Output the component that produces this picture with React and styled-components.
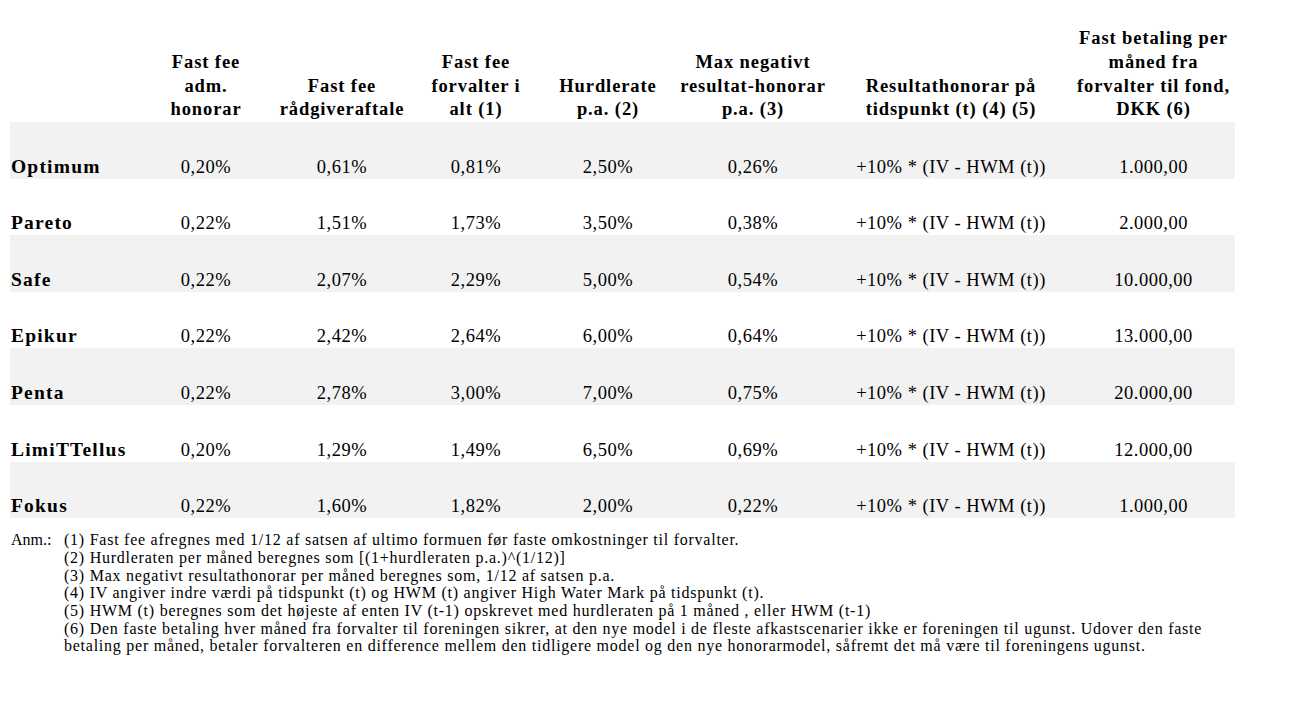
import React from 'react';
import styled, { createGlobalStyle } from 'styled-components';

const GlobalStyle = createGlobalStyle`
    html, body {
        margin: 0;
        padding: 0;
        background: #fff;
    }
    body {
        font-family: "Liberation Serif", "Times New Roman", serif;
        color: #000;
    }
`;

const Page = styled.div`
    width: 1291px;
    height: 705px;
    padding: 27px 0 0 10px;
    box-sizing: border-box;
`;

const FeeTable = styled.table`
    width: 1225px;
    border-collapse: collapse;
    table-layout: fixed;
    border-spacing: 0;
`;

const HeadCell = styled.th`
    width: ${p => p.w}px;
    font-size: 18.5px;
    line-height: 23.8px;
    font-weight: 700;
    letter-spacing: 0.9px;
    text-align: center;
    vertical-align: bottom;
    padding: 0;
`;

const Row = styled.tr`
    height: 56.57px;
    background: ${p => (p.shaded ? '#f2f2f2' : '#fff')};
`;

const NameCell = styled.td`
    font-size: 19.5px;
    font-weight: 700;
    letter-spacing: 1.2px;
    line-height: 24px;
    vertical-align: bottom;
    padding: 0 0 0 1px;
    white-space: nowrap;
`;

const ValueCell = styled.td`
    font-size: 18.5px;
    letter-spacing: 0.5px;
    line-height: 24px;
    text-align: center;
    vertical-align: bottom;
    padding: 0;
    white-space: nowrap;
`;

const Notes = styled.div`
    display: flex;
    margin-top: 13px;
    font-size: 16px;
    line-height: 17.7px;
    letter-spacing: 0.75px;
`;

const NotesLabel = styled.div`
    width: 53px;
    padding-left: 1px;
    letter-spacing: 0;
`;

const NotesList = styled.div`
    display: flex;
    flex-direction: column;
`;

const Note = styled.div`
    white-space: nowrap;
`;

const columns = [
    { w: 130, head: [] },
    { w: 132, head: ['Fast fee', 'adm.', 'honorar'] },
    { w: 140, head: ['Fast fee', 'rådgiveraftale'] },
    { w: 128, head: ['Fast fee', 'forvalter i', 'alt (1)'] },
    { w: 136, head: ['Hurdlerate', 'p.a. (2)'] },
    { w: 154, head: ['Max negativt', 'resultat-honorar', 'p.a. (3)'] },
    { w: 242, head: ['Resultathonorar på', 'tidspunkt (t) (4) (5)'] },
    { w: 163, head: ['Fast betaling per', 'måned fra', 'forvalter til fond,', 'DKK (6)'] },
];

const funds = [
    ['Optimum', '0,20%', '0,61%', '0,81%', '2,50%', '0,26%', '1.000,00'],
    ['Pareto', '0,22%', '1,51%', '1,73%', '3,50%', '0,38%', '2.000,00'],
    ['Safe', '0,22%', '2,07%', '2,29%', '5,00%', '0,54%', '10.000,00'],
    ['Epikur', '0,22%', '2,42%', '2,64%', '6,00%', '0,64%', '13.000,00'],
    ['Penta', '0,22%', '2,78%', '3,00%', '7,00%', '0,75%', '20.000,00'],
    ['LimiTTellus', '0,20%', '1,29%', '1,49%', '6,50%', '0,69%', '12.000,00'],
    ['Fokus', '0,22%', '1,60%', '1,82%', '2,00%', '0,22%', '1.000,00'],
];

const notes = [
    '(1) Fast fee afregnes med 1/12 af satsen af ultimo formuen før faste omkostninger til forvalter.',
    '(2) Hurdleraten per måned beregnes som [(1+hurdleraten p.a.)^(1/12)]',
    '(3) Max negativt resultathonorar per måned beregnes som, 1/12 af satsen p.a.',
    '(4) IV angiver indre værdi på tidspunkt (t) og HWM (t) angiver High Water Mark på tidspunkt (t).',
    '(5) HWM (t) beregnes som det højeste af enten IV (t-1) opskrevet med hurdleraten på 1 måned , eller HWM (t-1)',
    '(6) Den faste betaling hver måned fra forvalter til foreningen sikrer, at den nye model i de fleste afkastscenarier ikke er foreningen til ugunst. Udover den faste',
    'betaling per måned, betaler forvalteren en difference mellem den tidligere model og den nye honorarmodel, såfremt det må være til foreningens ugunst.',
];

function App() {
    return (
        <Page>
            <GlobalStyle />
            <FeeTable>
                <thead>
                    <tr>
                        {columns.map((col, i) => (
                            <HeadCell key={i} w={col.w}>
                                {col.head.map((line, j) => (
                                    <React.Fragment key={j}>
                                        {j > 0 && <br />}
                                        {line}
                                    </React.Fragment>
                                ))}
                            </HeadCell>
                        ))}
                    </tr>
                </thead>
                <tbody>
                    {funds.map((f, i) => (
                        <Row key={f[0]} shaded={i % 2 === 0}>
                            <NameCell>{f[0]}</NameCell>
                            <ValueCell>{f[1]}</ValueCell>
                            <ValueCell>{f[2]}</ValueCell>
                            <ValueCell>{f[3]}</ValueCell>
                            <ValueCell>{f[4]}</ValueCell>
                            <ValueCell>{f[5]}</ValueCell>
                            <ValueCell>+10% * (IV - HWM (t))</ValueCell>
                            <ValueCell>{f[6]}</ValueCell>
                        </Row>
                    ))}
                </tbody>
            </FeeTable>
            <Notes>
                <NotesLabel>Anm.:</NotesLabel>
                <NotesList>
                    {notes.map((n, i) => (
                        <Note key={i}>{n}</Note>
                    ))}
                </NotesList>
            </Notes>
        </Page>
    );
}

export default App;
